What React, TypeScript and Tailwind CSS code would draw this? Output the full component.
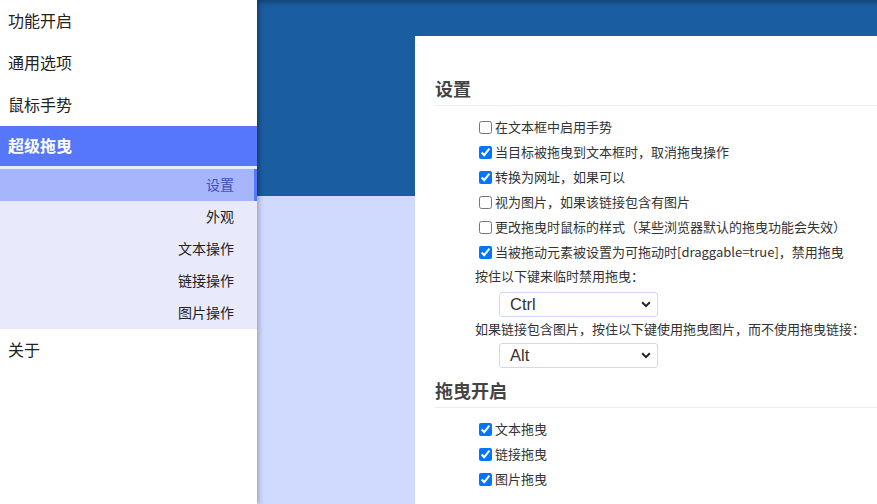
import React from 'react';

const font = { fontFamily: '"Microsoft YaHei", "Noto Sans CJK SC", "Liberation Sans", sans-serif' };

const mainNav = ['功能开启', '通用选项', '鼠标手势'];
const subNav = ['设置', '外观', '文本操作', '链接操作', '图片操作'];

function Check({ label, checked }: { label: string; checked?: boolean }) {
  return (
    <label className="flex h-[25px] items-center pl-[44px] text-[13px] text-[#333]">
      <input type="checkbox" defaultChecked={checked} className="m-0 h-[13px] w-[13px] accent-[#0075ff]" />
      <span className="ml-[3px] pb-[1px]">{label}</span>
    </label>
  );
}

function Select({ value }: { value: string }) {
  return (
    <div className="ml-[64px] flex h-[25px] w-[159px] items-center justify-between rounded-[3px] border border-[#cfd8fb] bg-white pl-[10px] pr-[6px] text-[16.5px] text-[#333]" style={{ fontFamily: '"Liberation Sans", sans-serif' }}>
      <span>{value}</span>
      <svg width="10" height="7" viewBox="0 0 10 7" fill="none">
        <path d="M1.2 1.3 5 5.1 8.8 1.3" stroke="#222" strokeWidth="2" />
      </svg>
    </div>
  );
}

function Heading({ children }: { children: React.ReactNode }) {
  return (
    <div className="border-b border-[#ececf8] pb-[5px] text-[18px] font-bold leading-[24px] text-[#444]">{children}</div>
  );
}

export default function App() {
  return (
    <div className="flex h-[504px] w-[877px] overflow-hidden bg-white" style={font}>
      {/* sidebar */}
      <nav className="relative z-10 w-[257px] shrink-0 bg-white shadow-[2px_0_5px_rgba(0,0,0,0.25)]">
        {mainNav.map((t) => (
          <div key={t} className="flex h-[42px] items-center pb-[3px] pl-2 text-[16px] text-[#222]">{t}</div>
        ))}
        <div className="flex h-[40px] items-center bg-[#5677fc] pb-[2px] pl-2 text-[16px] font-bold text-white">超级拖曳</div>
        <div className="bg-[#e8eafc] pt-[3px]">
          {subNav.map((t, i) => (
            <div
              key={t}
              className={`flex h-[32px] items-center justify-end pb-[2px] text-[14px] ${i === 0 ? 'border-r-[3px] border-[#5677fc] bg-[#a5b6fd] pr-[20px] text-[#3f51b5]' : 'pr-[23px] text-[#222]'}`}
            >
              {t}
            </div>
          ))}
        </div>
        <div className="flex h-[42px] items-center pb-[3px] pl-2 text-[16px] text-[#222]">关于</div>
      </nav>

      {/* main */}
      <main className="flex flex-1 flex-col bg-[#d0daff]">
        <div className="h-[196px] shrink-0 bg-[#1a5da0] shadow-[inset_0_3px_4px_rgba(0,0,0,0.25)]" />
        <div className="-mt-[160px] ml-[158px] w-[700px] bg-white px-[20px] pb-8 pt-[40px]">
          <Heading>设置</Heading>
          <div className="mt-[9px]">
            <Check label="在文本框中启用手势" />
            <Check label="当目标被拖曳到文本框时，取消拖曳操作" checked />
            <Check label="转换为网址，如果可以" checked />
            <Check label="视为图片，如果该链接包含有图片" />
            <Check label="更改拖曳时鼠标的样式（某些浏览器默认的拖曳功能会失效）" />
            <Check label="当被拖动元素被设置为可拖动时[draggable=true]，禁用拖曳" checked />
            <div className="flex h-[25px] items-center pb-[3px] pl-[40px] text-[13px] text-[#333]">按住以下键来临时禁用拖曳：</div>
            <div className="mt-[2px]"><Select value="Ctrl" /></div>
            <div className="flex h-[26px] items-center pb-[2px] pl-[40px] text-[13px] text-[#333]">如果链接包含图片，按住以下键使用拖曳图片，而不使用拖曳链接：</div>
            <Select value="Alt" />
          </div>
          <div className="mt-[10px]">
            <Heading>拖曳开启</Heading>
          </div>
          <div className="mt-[9px]">
            <Check label="文本拖曳" checked />
            <Check label="链接拖曳" checked />
            <Check label="图片拖曳" checked />
          </div>
        </div>
      </main>
    </div>
  );
}
